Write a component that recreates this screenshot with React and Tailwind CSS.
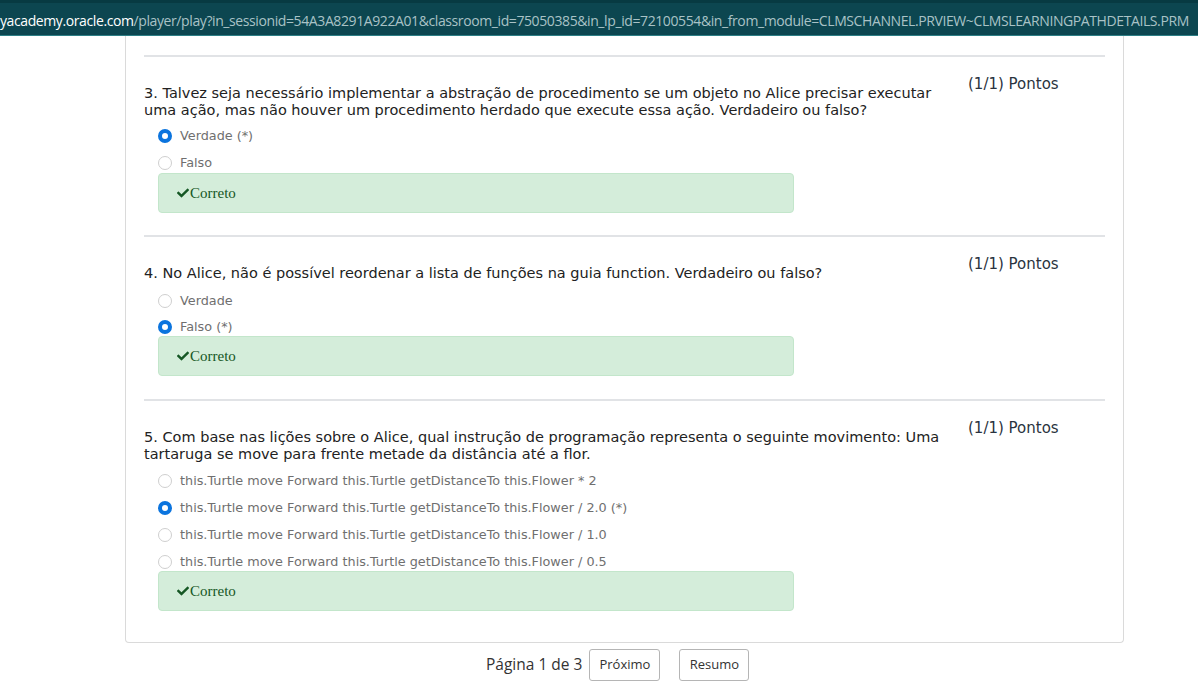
import React from "react";

const Check = () => (
  <svg viewBox="0 0 512 512" className="w-[12px] h-[12px] mr-[1px]" fill="#155724">
    <path d="M173.898 439.404l-166.4-166.4c-9.997-9.997-9.997-26.206 0-36.204l36.203-36.204c9.997-9.998 26.207-9.998 36.204 0L192 312.69 432.095 72.596c9.997-9.997 26.207-9.997 36.204 0l36.203 36.204c9.997 9.997 9.997 26.206 0 36.204l-294.4 294.401c-9.998 9.997-26.207 9.997-36.204-.001z" />
  </svg>
);

const Radio = ({ checked, label, tight }) => (
  <div className={tight ? "flex items-center h-[20px] mb-[6px] last:mb-0" : "flex items-center h-[20px] mb-[7px] last:mb-0"}>
    {checked ? (
      <span className="w-[14px] h-[14px] rounded-full border-[4px] border-[#0b74de] bg-white shrink-0" />
    ) : (
      <span className="w-[14px] h-[14px] rounded-full border border-[#cfcfcf] bg-white shrink-0" />
    )}
    <span className="ml-[8px] text-[12.8px] text-[#6f6f6f] font-['DejaVu_Sans',sans-serif]">{label}</span>
  </div>
);

const Question = ({ text, options, first, tight, pull }) => (
  <div>
    <div className="h-[2px] bg-[#e1e3e6]" />
    <div className="flex">
      <div className="w-[810px] pt-[28px]">
        <p className="text-[14.5px] leading-[17px] text-[#222] font-['DejaVu_Sans',sans-serif]">{text}</p>
        <div className={first ? "ml-[14px] mt-[7px]" : pull ? "ml-[14px] mt-[8px]" : "ml-[14px] mt-[9px]"}>
          {options.map((o, i) => (
            <Radio key={i} checked={o.checked} label={o.label} tight={tight} />
          ))}
        </div>
        <div className={(pull ? "-mt-[1px] " : tight ? "-mt-[1px] " : "") + "ml-[14px] w-[636px] h-[40px] flex items-center pl-[18px] bg-[#d4edda] border border-[#c3e6cb] rounded-[4px]"}>
          <Check />
          <span className="text-[15px] text-[#155724] font-['Liberation_Serif',serif]">Correto</span>
        </div>
      </div>
      <div className="pl-[14px] pt-[17px] text-[15px] leading-[20px] text-[#2a3340] font-['DejaVu_Sans',sans-serif]">
        (1/1) Pontos
      </div>
    </div>
  </div>
);

export default function App() {
  return (
    <div className="w-[1198px] h-[699px] bg-white overflow-hidden">
      <div className="h-[36px] bg-[#0c4650] border-t-[3px] border-t-[#073a42] border-b border-b-[#2d7f86] pt-[2px] flex items-center whitespace-nowrap overflow-hidden font-['Open_Sans',sans-serif] text-[14px] tracking-[-0.4px]">
        <span className="text-white">yacademy.oracle.com</span>
        <span className="text-[#a9c2c6]">/player/play?in_sessionid=54A3A8291A922A01&amp;classroom_id=75050385&amp;in_lp_id=72100554&amp;in_from_module=CLMSCHANNEL.PRVIEW~CLMSLEARNINGPATHDETAILS.PRM</span>
      </div>
      <div className="ml-[125px] w-[999px] border border-t-0 border-[#dadada] rounded-b-[4px] px-[18px] pt-[19px] pb-[31px]">
        <Question
          first
          text="3. Talvez seja necessário implementar a abstração de procedimento se um objeto no Alice precisar executar uma ação, mas não houver um procedimento herdado que execute essa ação. Verdadeiro ou falso?"
          options={[
            { checked: true, label: "Verdade (*)" },
            { checked: false, label: "Falso" },
          ]}
        />
        <div className="h-[22px]" />
        <Question
          tight
          text="4. No Alice, não é possível reordenar a lista de funções na guia function. Verdadeiro ou falso?"
          options={[
            { checked: false, label: "Verdade" },
            { checked: true, label: "Falso (*)" },
          ]}
        />
        <div className="h-[23px]" />
        <Question
          pull
          text="5. Com base nas lições sobre o Alice, qual instrução de programação representa o seguinte movimento: Uma tartaruga se move para frente metade da distância até a flor."
          options={[
            { checked: false, label: "this.Turtle move Forward this.Turtle getDistanceTo this.Flower * 2" },
            { checked: true, label: "this.Turtle move Forward this.Turtle getDistanceTo this.Flower / 2.0 (*)" },
            { checked: false, label: "this.Turtle move Forward this.Turtle getDistanceTo this.Flower / 1.0" },
            { checked: false, label: "this.Turtle move Forward this.Turtle getDistanceTo this.Flower / 0.5" },
          ]}
        />
      </div>
      <div className="ml-[486px] mt-[6px] flex items-center font-['Open_Sans',sans-serif] text-[#333]">
        <span className="text-[15.5px]">Página 1 de 3</span>
        <button className="ml-[7px] h-[32px] w-[71px] border border-[#b5b5b5] rounded-[3px] bg-white text-[13px] text-[#333]">Próximo</button>
        <button className="ml-[19px] h-[32px] w-[70px] border border-[#b5b5b5] rounded-[3px] bg-white text-[13px] text-[#333]">Resumo</button>
      </div>
    </div>
  );
}
